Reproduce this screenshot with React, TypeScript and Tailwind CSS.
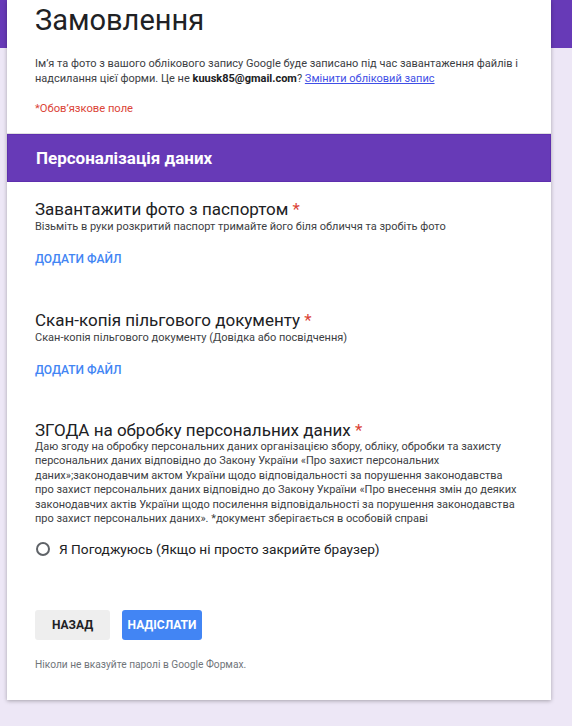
export default function App() {
  const font = { fontFamily: "Roboto, 'Noto Sans', Arial, sans-serif" };
  return (
    <div
      className="min-h-[726px] w-full bg-[linear-gradient(to_bottom,#673ab7_0,#673ab7_48px,#ede7f6_48px)] pb-[25px]"
      style={font}
    >
      <div className="ml-[7px] w-[544px] bg-white shadow-[0_1px_4px_rgba(0,0,0,0.3)]">
        {/* Form header */}
        <div className="px-[28px] pb-[16px]">
          <h1 className="text-[29px] leading-[40px] text-[#202124] font-normal">Замовлення</h1>
          <p className="mt-[16px] text-[11px] leading-[15px] text-[#3c4043]">
            Ім’я та фото з вашого облікового запису Google буде записано під час завантаження файлів і
            надсилання цієї форми. Це не <span className="font-bold text-[#202124]">kuusk85@gmail.com</span>?{" "}
            <a className="text-[#3f4fe6] underline">Змінити обліковий запис</a>
          </p>
          <p className="mt-[15px] text-[11.2px] leading-[16px] text-[#db4437]">*Обов’язкове поле</p>
        </div>

        {/* Section header */}
        <div className="border-t border-[#e0e0e0]">
          <div className="h-[48px] flex items-center px-[28px] bg-[#673ab7] border border-[#5e2fae]">
            <h2 className="text-[17px] font-bold text-white leading-[20px]">Персоналізація даних</h2>
          </div>
        </div>

        <div className="px-[28px] pb-[28px]">
          {/* Q1 */}
          <div className="mt-[17px] text-[17px] leading-[20px] text-[#202124]">
            Завантажити фото з паспортом <span className="text-[#db4437]">*</span>
          </div>
          <div className="mt-[1px] text-[11px] leading-[14px] text-[#3c4043]">
            Візьміть в руки розкритий паспорт тримайте його біля обличчя та зробіть фото
          </div>
          <div className="mt-[17px] text-[12px] leading-[16px] font-medium text-[#4285f4]">ДОДАТИ ФАЙЛ</div>

          {/* Q2 */}
          <div className="mt-[43px] text-[17px] leading-[20px] text-[#202124]">
            Скан-копія пільгового документу <span className="text-[#db4437]">*</span>
          </div>
          <div className="mt-[1px] text-[11px] leading-[14px] text-[#3c4043]">
            Скан-копія пільгового документу (Довідка або посвідчення)
          </div>
          <div className="mt-[17px] text-[12px] leading-[16px] font-medium text-[#4285f4]">ДОДАТИ ФАЙЛ</div>

          {/* Q3 */}
          <div className="mt-[42px] text-[17px] leading-[20px] text-[#202124]">
            ЗГОДА на обробку персональних даних <span className="text-[#db4437]">*</span>
          </div>
          <div className="text-[11px] leading-[14.4px] text-[#3c4043]">
            Даю згоду на обробку персональних даних організацією збору, обліку, обробки та захисту
            персональних даних відповідно до Закону України «Про захист персональних
            даних»;законодавчим актом України щодо відповідальності за порушення законодавства про
            захист персональних даних відповідно до Закону України «Про внесення змін до деяких
            законодавчих актів України щодо посилення відповідальності за порушення законодавства
            про захист персональних даних». *документ зберігається в особовій справі
          </div>
          <div className="mt-[13px] h-[20px] flex items-center gap-[9px]">
            <div className="ml-[1px] w-[14px] h-[14px] rounded-full border-2 border-[#5f6368]" />
            <span className="text-[13.7px] text-[#202124]">Я Погоджуюсь (Якщо ні просто закрийте браузер)</span>
          </div>

          {/* Buttons */}
          <div className="mt-[51px] flex gap-[12px]">
            <button className="h-[30px] w-[75px] rounded-[3px] bg-[#eeeeee] text-[12px] font-bold text-[#202124]">
              НАЗАД
            </button>
            <button className="h-[30px] w-[80px] rounded-[3px] bg-[#4285f4] text-[12px] font-bold text-white">
              НАДІСЛАТИ
            </button>
          </div>

          <div className="mt-[18px] text-[10.2px] leading-[14px] text-[#70757a]">
            Ніколи не вказуйте паролі в Google Формах.
          </div>
        </div>
      </div>
    </div>
  );
}
